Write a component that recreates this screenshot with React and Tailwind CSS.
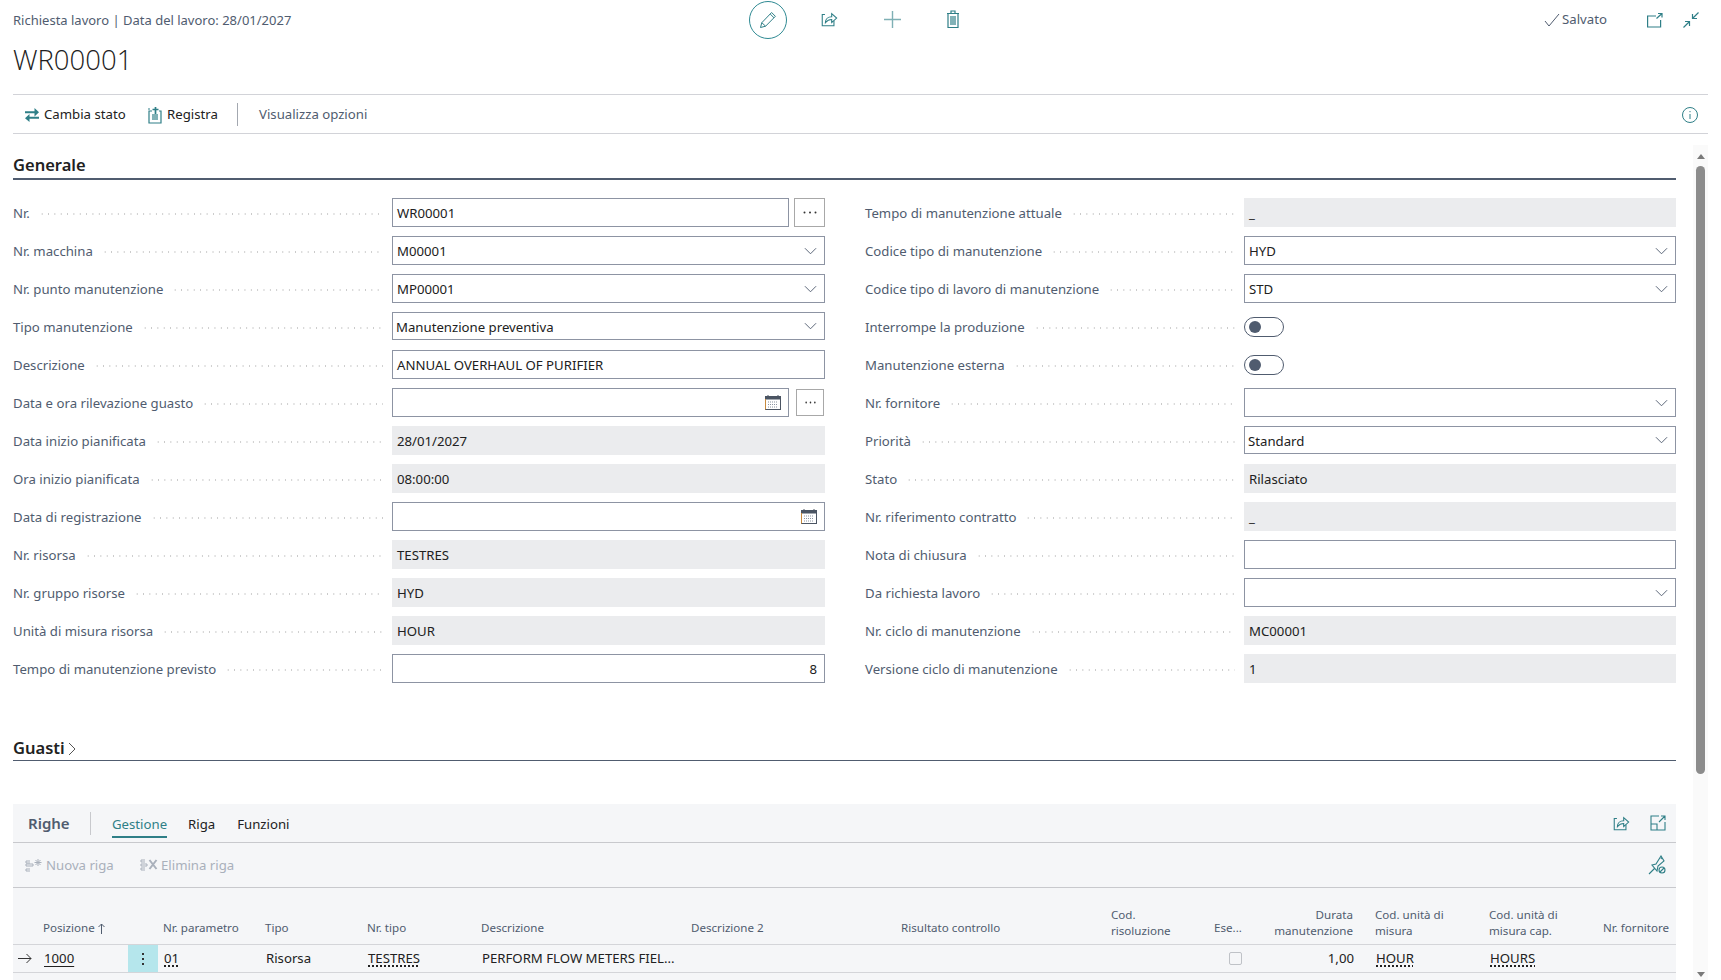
import React from "react";

const teal = "#2f7f87";

function I({ w = 20, h = 20, vb = "0 0 20 20", sw = 1.2, color = teal, className = "", children }) {
  return (
    <svg width={w} height={h} viewBox={vb} fill="none" stroke={color} strokeWidth={sw} className={"shrink-0 " + className}>
      {children}
    </svg>
  );
}

const Chevron = () => (
  <svg width="13" height="8" viewBox="0 0 14 8" fill="none" stroke="#505c6f" strokeWidth="1" className="shrink-0">
    <path d="M1 1l6 6 6-6" />
  </svg>
);

const Calendar = () => (
  <svg width="16" height="15" viewBox="0 0 16 15" className="shrink-0">
    <rect x="0.5" y="1.5" width="15" height="13" fill="#fff" stroke="#4b5563" />
    <rect x="0.5" y="1.5" width="15" height="3" fill="#4b5563" />
    <path d="M3 0v2M13 0v2" stroke="#4b5563" />
    <path d="M0.5 4v10.5" stroke="#c98a3c" />
    <path d="M3 7h10M3 9.5h10M3 12h10" stroke="#8a93a0" strokeDasharray="1 1" />
  </svg>
);

function Dots() {
  return (
    <span className="flex-1 h-[4px] ml-[9px] mr-[9px] bg-[radial-gradient(circle,#c9c9c9_0.7px,transparent_1px)] bg-[size:6.35px_4px] bg-repeat-x bg-left" />
  );
}

function Field({ label, children }) {
  return (
    <div className="flex h-[29px] items-start">
      <div className="w-[379px] h-[29px] flex items-center text-[#505c6f] pt-[2px]">
        <span className="whitespace-nowrap">{label}</span>
        <Dots />
      </div>
      <div className="flex-1 min-w-0 flex gap-[5px]">{children}</div>
    </div>
  );
}

function Box({ v, right, tail, short }) {
  return (
    <div
      className={
        (short ? "h-[28px] pl-[3px] " : "h-[29px] pl-[4px] ") +
        "flex-1 border border-[#8d94a3] bg-white flex items-center pr-[7px] text-[#212121] min-w-0"
      }
    >
      <span className={"flex-1 whitespace-nowrap " + (short ? "pt-[3px] " : "pt-[2px] ") + (right ? "text-right" : "")}>{v}</span>
      {tail}
    </div>
  );
}

const Sel = ({ v, short }) => <Box v={v} short={short} tail={<Chevron />} />;

const Ro = ({ v }) => (
  <div className="h-[29px] flex-1 bg-[#ebecee] flex items-center pl-[5px] pt-[2px] text-[#212121]">{v}</div>
);

const More = ({ small }) => (
  <div
    className={
      (small ? "w-[28px] h-[27px] mt-[1px] ml-[2px] mr-[1px] " : "w-[31px] h-[29px] ") +
      "border border-[#a8a8a8] bg-white flex items-center justify-center shrink-0"
    }
  >
    <svg width={small ? 11 : 14} height="3" viewBox="0 0 14 3" preserveAspectRatio="none" fill="#333">
      <circle cx="1.5" cy="1.5" r="1" />
      <circle cx="7" cy="1.5" r="1" />
      <circle cx="12.5" cy="1.5" r="1" />
    </svg>
  </div>
);

const Toggle = () => (
  <div className="h-[29px] flex items-center">
    <div className="w-[40px] h-[20px] rounded-[10px] border-[1.5px] border-[#505c6f] flex items-center pl-[3.5px]">
      <span className="w-[12px] h-[12px] rounded-full bg-[#505c6f]" />
    </div>
  </div>
);

const Share = ({ s = 20 }) => (
  <I w={s} h={s}>
    <path d="M5.5 5H2.5v12.5h13V12" />
    <path d="M6 14c0-4 3-6.5 7-6.5V4l5.5 5-5.5 5v-3.5c-3 0-5 1-7 3.5z" />
  </I>
);

function Header() {
  return (
    <div className="flex h-[94px] shrink-0">
      <div className="w-[736px] shrink-0">
        <div className="h-[40px] flex items-center pt-[1px] text-[13px] text-[#505c6f]">Richiesta lavoro | Data del lavoro: 28/01/2027</div>
        <div className="mt-[1px] text-[27.5px] leading-[38px] font-light font-['Open_Sans',sans-serif] text-[#212121]">WR00001</div>
      </div>
      <div className="flex items-start h-[38px]">
        <div className="w-[38px] h-[38px] mt-[1px] rounded-full border border-[#2f8a93] flex items-center justify-center">
          <I w={20} h={20} sw={1}>
            <path d="M2.500 17.500l1.300-4.800L13.600 2.500l3.800 3.800-9.800 9.900z" />
            <path d="M12.200 4l3.800 3.800M3.800 12.700l3.800 3.500" />
          </I>
        </div>
        <div className="ml-[33px] h-[38px] flex items-center"><Share s={18} /></div>
        <div className="ml-[46px] h-[38px] flex items-center">
          <I w={17} h={17} vb="0 0 17 17" sw={1.4} color="#7fb0b5"><path d="M8.5 0v17M0 8.5h17" /></I>
        </div>
        <div className="ml-[45px] h-[38px] flex items-center">
          <I w={14} h={18} vb="0 0 14 18">
            <path d="M1 3.5h12M5 3.5V1h4v2.5M2 3.5v14h10v-14M5 6v9M7 6v9M9 6v9" />
          </I>
        </div>
      </div>
      <div className="ml-auto flex h-[40px] items-center">
        <I w={16} h={14} vb="0 0 16 14" color="#505c6f" sw={1}><path d="M1 8l4 5 10-12" /></I>
        <span className="ml-[2px] text-[#505c6f] text-[13.2px] w-[44px] whitespace-nowrap">Salvato</span>
        <div className="ml-[41px]">
          <I w={16} h={15} vb="0 0 16 15">
            <path d="M9 3H.6v11h13V7M9.5 5.5L15 .5M11 .5h4v4" />
          </I>
        </div>
        <div className="ml-[20px] mr-[9px]">
          <I w={16} h={16} vb="0 0 16 16">
            <path d="M15.5.5l-6 6M9.5 2v4.500h4.500M.5 15.500l6-6M6.500 14V9.500H2" />
          </I>
        </div>
      </div>
    </div>
  );
}

function Toolbar() {
  return (
    <div className="h-[40px] shrink-0 border-y border-[#d2d3d8] flex items-center text-[#212121] pt-[1px]">
      <span className="ml-[12px]">
        <svg width="14" height="14" viewBox="0 0 14 14" fill={teal} className="shrink-0">
          <path d="M0 3.2h9.500V0L14 4.200 9.500 8.400V5.200H0zM14 8.800H4.500V6L0 10.200 4.500 14v-3.200H14z" />
        </svg>
      </span>
      <span className="ml-[5px] w-[90px] whitespace-nowrap">Cambia stato</span>
      <span className="ml-[13px]">
        <I w={16} h={18} vb="0 0 16 18">
          <path d="M5 5H2v12h12V5h-2M6 8v6M8 8v6M10 8v6" />
          <path d="M8.500 1v7M5.500 3.500h6" strokeWidth="1.700" />
          <path d="M1 3h2" />
        </I>
      </span>
      <span className="ml-[4px] w-[54px] whitespace-nowrap">Registra</span>
      <span className="ml-[16px] w-px h-[23px] bg-[#a3a8b0]" />
      <span className="ml-[21px] text-[#505c6f] whitespace-nowrap">Visualizza opzioni</span>
      <span className="ml-auto mr-[10px]">
        <I w={16} h={16} vb="0 0 16 16" sw={1}>
          <circle cx="8" cy="8" r="7.500" />
          <path d="M8 7v5M8 4v1.200" />
        </I>
      </span>
    </div>
  );
}

const left = [
  ["Nr.", <><Box v="WR00001" /><More /></>],
  ["Nr. macchina", <Sel v="M00001" />],
  ["Nr. punto manutenzione", <Sel v="MP00001" />],
  ["Tipo manutenzione", <Sel v="Manutenzione preventiva" short />],
  ["Descrizione", <Box v="ANNUAL OVERHAUL OF PURIFIER" />],
  ["Data e ora rilevazione guasto", <><Box v="" tail={<Calendar />} /><More small /></>],
  ["Data inizio pianificata", <Ro v="28/01/2027" />],
  ["Ora inizio pianificata", <Ro v="08:00:00" />],
  ["Data di registrazione", <Box v="" tail={<Calendar />} />],
  ["Nr. risorsa", <Ro v="TESTRES" />],
  ["Nr. gruppo risorse", <Ro v="HYD" />],
  ["Unità di misura risorsa", <Ro v="HOUR" />],
  ["Tempo di manutenzione previsto", <Box v="8" right />],
];

const right = [
  ["Tempo di manutenzione attuale", <Ro v="_" />],
  ["Codice tipo di manutenzione", <Sel v="HYD" />],
  ["Codice tipo di lavoro di manutenzione", <Sel v="STD" />],
  ["Interrompe la produzione", <Toggle />],
  ["Manutenzione esterna", <Toggle />],
  ["Nr. fornitore", <Sel v="" />],
  ["Priorità", <Sel v="Standard" short />],
  ["Stato", <Ro v="Rilasciato" />],
  ["Nr. riferimento contratto", <Ro v="_" />],
  ["Nota di chiusura", <Box v="" />],
  ["Da richiesta lavoro", <Sel v="" />],
  ["Nr. ciclo di manutenzione", <Ro v="MC00001" />],
  ["Versione ciclo di manutenzione", <Ro v="1" />],
];

const cols = [
  [<span className="inline-flex items-center gap-[3px]">Posizione<svg width="7" height="11" viewBox="0 0 7 11" fill="none" stroke="#505c6f"><path d="M3.500 11V1M.5 4l3-3 3 3" /></svg></span>, "pl-[30px] pb-[8px]"],
  ["Nr. parametro", "pl-[5px] pb-[8px]"],
  ["Tipo", "pl-[5px] pb-[8px]"],
  ["Nr. tipo", "pl-[5px] pb-[8px]"],
  ["Descrizione", "pl-[5px] pb-[8px]"],
  ["Descrizione 2", "pl-[5px] pb-[8px]"],
  ["Risultato controllo", "pl-[5px] pb-[8px]"],
  [<>Cod.<br />risoluzione</>, "pl-[5px] pb-[5px]"],
  ["Ese...", "pl-[5px] pb-[8px]"],
  [<>Durata<br />manutenzione</>, "pr-[17px] text-right pb-[5px]"],
  [<>Cod. unità di<br />misura</>, "pl-[5px] pb-[5px]"],
  [<>Cod. unità di<br />misura cap.</>, "pl-[5px] pb-[5px]"],
  ["Nr. fornitore", "pl-[5px] pb-[8px]"],
];

const dotted = "underline decoration-dotted decoration-[#212121] decoration-[1.5px] underline-offset-[3px]";

function Lines() {
  const grid = "grid grid-cols-[145px_102px_102px_114px_210px_210px_210px_103px_50px_111px_114px_114px_78px]";
  return (
    <div className="mt-[43px] bg-[#f5f6f8] h-[176px]">
      <div className="h-[39px] border-b border-[#c8c9cd] flex items-center">
        <span className="ml-[15px] text-[15px] font-semibold text-[#505c6f] w-[47px]">Righe</span>
        <span className="ml-[15px] w-px h-[23px] bg-[#c8c9cd]" />
        <span className="ml-[21px] h-[26px] pt-[3px] text-[#2f7f87] border-b-2 border-[#2f7f87] mt-[3px]">Gestione</span>
        <span className="ml-[21px] pt-[3px] text-[#212121]">Riga</span>
        <span className="ml-[22px] pt-[3px] text-[#212121]">Funzioni</span>
        <span className="ml-auto"><Share s={18} /></span>
        <span className="ml-[20px] mr-[10px]">
          <I w={16} h={16} vb="0 0 16 16" sw={1.1}>
            <path d="M9 1H1v14h14V7M1 9h6v6M9 7l6-6M11 1h4v4" />
          </I>
        </span>
      </div>
      <div className="h-[45px] border-b border-[#c8c9cd] flex items-center text-[#a9b0bb]">
        <span className="ml-[12px]">
          <svg width="18" height="14" viewBox="0 0 18 14" fill="none" stroke="#a9b0bb">
            <path d="M5 3H1v2h4M1 8h7V6H1zM5 11H1v2h4" />
            <path d="M13 1v7M9.500 4.500h7M10.500 2l5 5M15.500 2l-5 5" />
          </svg>
        </span>
        <span className="ml-[3px] pt-[2px] w-[70px] whitespace-nowrap">Nuova riga</span>
        <span className="ml-[24px]">
          <svg width="18" height="14" viewBox="0 0 18 14" fill="none" stroke="#a9b0bb">
            <path d="M5 2H1v2h4M1 8h6V6H1zM5 10H1v2h4" />
            <path d="M9.500 2l7 9M16.500 2l-7 9" strokeWidth="2" />
          </svg>
        </span>
        <span className="ml-[3px] pt-[2px] whitespace-nowrap">Elimina riga</span>
        <span className="ml-auto mr-[9px]">
          <I w={19} h={20} vb="0 0 19 20" sw={1.1}>
            <path d="M1 19l6-6M4 10l4-1 5-8 3 5-6 5-1 5zM13 4l1-2" />
            <circle cx="14" cy="15" r="3" />
            <path d="M12 17l4-4" />
          </I>
        </span>
      </div>
      <div className={grid + " h-[57px] border-b border-[#d4d5d9] text-[11.6px] leading-[16px] text-[#505c6f]"}>
        {cols.map(([t, c], i) => (
          <div key={i} className={"self-end whitespace-nowrap " + c}>{t}</div>
        ))}
      </div>
      <div className={grid + " h-[28px] border-b border-[#d4d5d9] text-[#212121] items-center"}>
        <div className="flex h-[27px] items-center">
          <span className="ml-[5px] w-[26px]">
            <svg width="14" height="11" viewBox="0 0 14 11" fill="none" stroke="#333"><path d="M0 5.500h13M8.500 1l4.500 4.500L8.500 10" /></svg>
          </span>
          <span className="underline underline-offset-[3px] w-[84px]">1000</span>
          <span className="w-[30px] h-[27px] bg-[#b5e6ec] flex flex-col items-center justify-center gap-[3px]">
            <span className="w-[2px] h-[2px] bg-[#333]" />
            <span className="w-[2px] h-[2px] bg-[#333]" />
            <span className="w-[2px] h-[2px] bg-[#333]" />
          </span>
        </div>
        <div className="pl-[6px]"><span className={dotted}>01</span></div>
        <div className="pl-[6px]">Risorsa</div>
        <div className="pl-[6px]"><span className={dotted}>TESTRES</span></div>
        <div className="pl-[6px] col-span-3 whitespace-nowrap">PERFORM FLOW METERS FIEL...</div>
        <div />
        <div className="pl-[20px]"><span className="block w-[13px] h-[13px] rounded-[2px] border border-[#bfc2c7] bg-[#f5f6f8]" /></div>
        <div className="pr-[16px] text-right">1,00</div>
        <div className="pl-[6px]"><span className={dotted}>HOUR</span></div>
        <div className="pl-[6px]"><span className={dotted}>HOURS</span></div>
        <div />
      </div>
    </div>
  );
}

function Scrollbar() {
  return (
    <div className="ml-[17px] w-[15px] mt-[11px] bg-[#fafafa] flex flex-col items-center h-[835px] shrink-0">
      <svg width="8" height="5" viewBox="0 0 8 5" className="mt-[9px]" fill="#7a7a7a"><path d="M4 0l4 5H0z" /></svg>
      <div className="mt-[7px] w-[9px] h-[608px] rounded-[5px] bg-[#8c8c8c]" />
      <svg width="8" height="5" viewBox="0 0 8 5" className="mt-auto mb-[3px]" fill="#7a7a7a"><path d="M4 5l4-5H0z" /></svg>
    </div>
  );
}

export default function App() {
  return (
    <div className="w-[1721px] h-[980px] overflow-hidden bg-white px-[13px] flex flex-col text-[13.2px] font-['Noto_Sans',sans-serif]">
      <Header />
      <Toolbar />
      <div className="flex flex-1 min-h-0">
        <div className="w-[1663px] shrink-0">
          <div className="h-[46px] border-b-2 border-[#505c6f] flex items-center pt-[18px] text-[16.5px] font-semibold text-[#212121] leading-none">Generale</div>
          <div className="mt-[18px] grid grid-cols-[812px_811px] gap-x-[40px]">
            <div className="flex flex-col gap-[9px]">
              {left.map(([l, c], i) => <Field key={i} label={l}>{c}</Field>)}
            </div>
            <div className="flex flex-col gap-[9px]">
              {right.map(([l, c], i) => <Field key={i} label={l}>{c}</Field>)}
            </div>
          </div>
          <div className="mt-[54px] h-[24px] border-b border-[#505c6f] flex items-start text-[16.5px] font-semibold text-[#212121] leading-[22px]">
            Guasti
            <svg width="9" height="14" viewBox="0 0 9 14" fill="none" stroke="#555" className="ml-[3px] mt-[5px]"><path d="M1 1l6 6-6 6" /></svg>
          </div>
          <Lines />
        </div>
        <Scrollbar />
      </div>
    </div>
  );
}
